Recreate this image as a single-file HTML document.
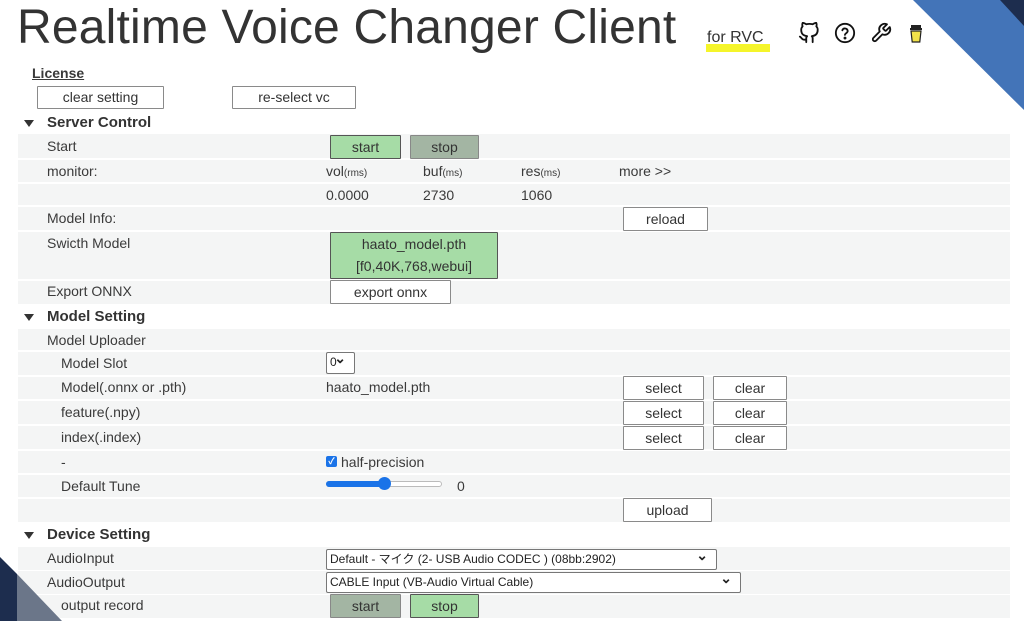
<!DOCTYPE html>
<html><head><meta charset="utf-8"><style>
*{box-sizing:border-box;margin:0;padding:0}
body{width:1024px;height:621px;overflow:hidden;background:#fff;font-family:"Liberation Sans","Noto Sans CJK JP",sans-serif;color:#3a3a3a;position:relative;font-size:14px}
.a{position:absolute;white-space:nowrap;z-index:2}
.row{position:absolute;left:18px;width:992px;background:#f4f5f5;z-index:0}
.btn{position:absolute;border:1px solid #8a8a8a;background:#fff;text-align:center;font-size:14px;color:#333;border-radius:1px;z-index:2}
.g{background:#a6dca6;border-color:#555}
.gd{background:#a3b5a3;border-color:#888}
.h{position:absolute;font-weight:bold;font-size:15px;color:#333;z-index:2}
.tri{position:absolute;width:0;height:0;border-left:5px solid transparent;border-right:5px solid transparent;border-top:7px solid #333;z-index:2}
small{font-size:10px}
.sel{position:absolute;border:1px solid #777;background:#fff;font-size:12px;border-radius:2px;padding-left:3px;line-height:19px;color:#222;z-index:2}
.sel:after{content:"⌄";position:absolute;right:8px;top:-4px;font-size:14px;font-weight:bold}
</style></head><body>
<svg class="a" style="left:0;top:0;z-index:1" width="1024" height="621">
<polygon points="913,0 1024,0 1024,110" fill="#4374b8"/>
<polygon points="1000,0 1024,0 1024,26" fill="#1d2d4e"/>
<polygon points="0,557 17,574 17,621 0,621" fill="#1d2d4e"/>
<polygon points="17,574 62,621 17,621" fill="#6b7689"/>
</svg>
<div class="a" style="left:17px;top:0px;font-size:48px;color:#333;letter-spacing:0.2px">Realtime Voice Changer Client</div>
<div class="a" style="left:706px;top:44px;width:64px;height:8px;background:#f5f52a"></div>
<div class="a" style="left:707px;top:29px;font-size:16px;color:#333">for RVC</div>
<svg class="a" style="left:798px;top:22px" width="22" height="22" viewBox="0 0 24 24" fill="none" stroke="#111" stroke-width="2" stroke-linecap="round" stroke-linejoin="round"><path d="M9 19c-5 1.5-5-2.5-7-3m14 6v-3.9a3.4 3.4 0 0 0-.9-2.6c3.1-.3 6.4-1.5 6.4-7A5.4 5.4 0 0 0 20 4.8 5 5 0 0 0 19.9 1S18.7.7 16 2.5a13.4 13.4 0 0 0-7 0C6.3.7 5.1 1 5.1 1A5 5 0 0 0 5 4.8a5.4 5.4 0 0 0-1.5 3.7c0 5.4 3.3 6.6 6.4 7a3.4 3.4 0 0 0-.9 2.6V22"/></svg>
<svg class="a" style="left:834px;top:22px" width="22" height="22" viewBox="0 0 24 24" fill="none" stroke="#111" stroke-width="2" stroke-linecap="round"><circle cx="12" cy="12" r="10"/><path d="M9.1 9a3 3 0 0 1 5.8 1c0 2-3 2.5-3 4"/><circle cx="12" cy="17.5" r=".6" fill="#111"/></svg>
<svg class="a" style="left:870px;top:22px" width="22" height="22" viewBox="0 0 24 24" fill="none" stroke="#111" stroke-width="2" stroke-linejoin="round"><path d="M14.7 6.3a1 1 0 0 0 0 1.4l1.6 1.6a1 1 0 0 0 1.4 0l3.8-3.8a6 6 0 0 1-7.9 7.9l-6.9 6.9a2.1 2.1 0 0 1-3-3l6.9-6.9a6 6 0 0 1 7.9-7.9z"/></svg>
<svg class="a" style="left:908px;top:24px" width="16" height="20" viewBox="0 0 16 20"><rect x="3" y="1" width="10" height="3" fill="#222"/><rect x="2" y="4" width="12" height="2" fill="#222"/><path d="M3 7h10l-1.2 11H4.2z" fill="#f2e24a" stroke="#222" stroke-width="1.2"/></svg>

<div class="a" style="left:32px;top:65px;font-weight:bold;font-size:14px;text-decoration:underline">License</div>
<div class="btn" style="left:37px;top:86px;width:127px;height:23px;line-height:21px">clear setting</div>
<div class="btn" style="left:232px;top:86px;width:124px;height:23px;line-height:21px">re-select vc</div>

<div class="tri" style="left:24px;top:120px"></div><div class="h" style="left:47px;top:114px">Server Control</div>
<div class="row" style="top:134px;height:24px"></div>
<div class="row" style="top:160px;height:22px"></div>
<div class="row" style="top:184px;height:21px"></div>
<div class="row" style="top:207px;height:23px"></div>
<div class="row" style="top:232px;height:47px"></div>
<div class="row" style="top:281px;height:23px"></div>
<div class="a" style="left:47px;top:138px">Start</div>
<div class="btn g" style="left:330px;top:135px;width:71px;height:24px;line-height:23px">start</div>
<div class="btn gd" style="left:410px;top:135px;width:69px;height:24px;line-height:23px">stop</div>
<div class="a" style="left:47px;top:163px">monitor:</div>
<div class="a" style="left:326px;top:163px">vol<small>(rms)</small></div>
<div class="a" style="left:423px;top:163px">buf<small>(ms)</small></div>
<div class="a" style="left:521px;top:163px">res<small>(ms)</small></div>
<div class="a" style="left:619px;top:163px">more &gt;&gt;</div>
<div class="a" style="left:326px;top:187px">0.0000</div>
<div class="a" style="left:423px;top:187px">2730</div>
<div class="a" style="left:521px;top:187px">1060</div>
<div class="a" style="left:47px;top:210px">Model Info:</div>
<div class="btn" style="left:623px;top:207px;width:85px;height:24px;line-height:22px">reload</div>
<div class="a" style="left:47px;top:235px">Swicth Model</div>
<div class="btn g" style="left:330px;top:232px;width:168px;height:47px;line-height:22px">haato_model.pth<br>[f0,40K,768,webui]</div>
<div class="a" style="left:47px;top:283px">Export ONNX</div>
<div class="btn" style="left:330px;top:280px;width:121px;height:24px;line-height:22px">export onnx</div>

<div class="tri" style="left:24px;top:314px"></div><div class="h" style="left:47px;top:308px">Model Setting</div>
<div class="row" style="top:329px;height:21px"></div>
<div class="row" style="top:352px;height:23px"></div>
<div class="row" style="top:377px;height:22px"></div>
<div class="row" style="top:401px;height:23px"></div>
<div class="row" style="top:426px;height:23px"></div>
<div class="row" style="top:451px;height:22px"></div>
<div class="row" style="top:475px;height:22px"></div>
<div class="row" style="top:499px;height:23px"></div>
<div class="a" style="left:47px;top:332px">Model Uploader</div>
<div class="a" style="left:61px;top:355px">Model Slot</div>
<div class="sel" style="left:326px;top:352px;width:29px;height:22px">0</div>
<div class="a" style="left:61px;top:379px">Model(.onnx or .pth)</div>
<div class="a" style="left:326px;top:379px">haato_model.pth</div>
<div class="a" style="left:61px;top:404px">feature(.npy)</div>
<div class="a" style="left:61px;top:429px">index(.index)</div>
<div class="btn" style="left:623px;top:376px;width:81px;height:24px;line-height:22px">select</div>
<div class="btn" style="left:713px;top:376px;width:74px;height:24px;line-height:22px">clear</div>
<div class="btn" style="left:623px;top:401px;width:81px;height:24px;line-height:22px">select</div>
<div class="btn" style="left:713px;top:401px;width:74px;height:24px;line-height:22px">clear</div>
<div class="btn" style="left:623px;top:426px;width:81px;height:24px;line-height:22px">select</div>
<div class="btn" style="left:713px;top:426px;width:74px;height:24px;line-height:22px">clear</div>
<div class="a" style="left:61px;top:454px">-</div>
<div class="a" style="left:326px;top:456px;width:11px;height:11px;background:#1a73e8;border-radius:2px;color:#fff;font-size:9px;line-height:11px;text-align:center;font-weight:bold">✓</div>
<div class="a" style="left:341px;top:454px">half-precision</div>
<div class="a" style="left:61px;top:478px">Default Tune</div>
<div class="a" style="left:326px;top:481px;width:116px;height:6px;border:1px solid #bbb;border-radius:3px;background:#fff"></div>
<div class="a" style="left:326px;top:481px;width:58px;height:6px;background:#1a73e8;border-radius:3px"></div>
<div class="a" style="left:378px;top:477px;width:13px;height:13px;background:#1a73e8;border-radius:50%"></div>
<div class="a" style="left:457px;top:478px">0</div>
<div class="btn" style="left:623px;top:498px;width:89px;height:24px;line-height:22px">upload</div>

<div class="tri" style="left:24px;top:532px"></div><div class="h" style="left:47px;top:526px">Device Setting</div>
<div class="row" style="top:547px;height:23px"></div>
<div class="row" style="top:571px;height:23px"></div>
<div class="row" style="top:595px;height:23px"></div>
<div class="a" style="left:47px;top:550px">AudioInput</div>
<div class="sel" style="left:326px;top:549px;width:391px;height:21px">Default - マイク (2- USB Audio CODEC ) (08bb:2902)</div>
<div class="a" style="left:47px;top:574px">AudioOutput</div>
<div class="sel" style="left:326px;top:572px;width:415px;height:21px">CABLE Input (VB-Audio Virtual Cable)</div>
<div class="a" style="left:61px;top:597px">output record</div>
<div class="btn gd" style="left:330px;top:594px;width:71px;height:24px;line-height:23px">start</div>
<div class="btn g" style="left:410px;top:594px;width:69px;height:24px;line-height:23px">stop</div>
</body></html>
